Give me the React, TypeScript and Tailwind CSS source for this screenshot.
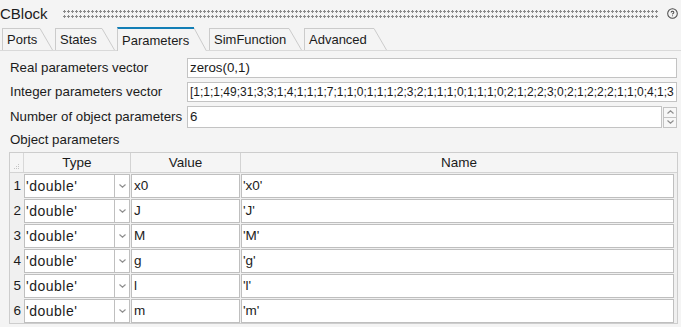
import clsx from "clsx";

const tabs = [
  { label: "Ports", width: "w-[38px]" },
  { label: "States", width: "w-[47px]" },
  { label: "Parameters", width: "w-[77px]", active: true },
  { label: "SimFunction", width: "w-[80px]" },
  { label: "Advanced", width: "w-[70px]" },
];

const rows = [
  { type: "'double'", value: "x0", name: "'x0'" },
  { type: "'double'", value: "J", name: "'J'" },
  { type: "'double'", value: "M", name: "'M'" },
  { type: "'double'", value: "g", name: "'g'" },
  { type: "'double'", value: "l", name: "'l'" },
  { type: "'double'", value: "m", name: "'m'" },
];

const intVector =
  "[1;1;1;49;31;3;3;1;4;1;1;1;7;1;1;0;1;1;1;2;3;2;1;1;1;0;1;1;1;0;2;1;2;2;3;0;2;1;2;2;2;1;1;0;4;1;3";

function Tab({ label, width, active }: { label: string; width: string; active?: boolean }) {
  const h = active ? 24 : 22;
  return (
    <div className={clsx("flex bg-[#f4f4f4]", active ? "h-[24px] -mb-px" : "h-[22px]")}>
      <div
        className={clsx(
          width,
          "flex items-center border-l border-[#cbcbcb] pl-[4px] whitespace-nowrap",
          active ? "border-t-2 border-t-[#137fb6]" : "border-t"
        )}
      >
        {label}
      </div>
      <svg width="13" height={h} className="block">
        <path d={`M0 ${active ? 1 : 0.5} L12.5 ${h}`} stroke="#cbcbcb" strokeWidth="1" fill="none" />
      </svg>
    </div>
  );
}

function Chevron({ up }: { up?: boolean }) {
  return (
    <svg width="7" height="4" viewBox="0 0 7 4">
      <path d={up ? "M0.5 3.5 L3.5 0.8 L6.5 3.5" : "M0.5 0.5 L3.5 3.2 L6.5 0.5"} stroke="#8f8f8f" strokeWidth="1.2" fill="none" />
    </svg>
  );
}

function Field({ label, children }: { label: string; children: React.ReactNode }) {
  return (
    <div className="flex items-center">
      <div className="w-[177px] whitespace-nowrap text-[13.3px]">{label}</div>
      {children}
    </div>
  );
}

export default function App() {
  return (
    <div className="h-[327px] w-[681px] overflow-hidden bg-[#f4f4f4] font-['Liberation_Sans',Arial,sans-serif] text-[13px] leading-none text-[#1b1b1b]">
      <div className="flex h-[26px] items-center">
        <span className="text-[15px]">CBlock</span>
        <div className="ml-[15px] mt-[3px] h-[10px] flex-1 bg-[radial-gradient(circle_at_1.5px_1.5px,#8a8a8a_1px,transparent_1.4px)] bg-[length:4px_5px]" />
        <svg width="11" height="11" viewBox="0 0 24 24" className="ml-[8px] mr-[3px]" fill="none" stroke="#4a4a4a" strokeWidth="2.2" strokeLinecap="round">
          <circle cx="12" cy="12" r="10.5" />
          <path d="M9.09 9a3 3 0 0 1 5.83 1c0 2-3 3-3 3" />
          <path d="M12 17h.01" />
        </svg>
      </div>

      <div className="flex h-[25px] items-end gap-[2px] border-b border-[#d9d9d9] pl-[2px]">
        {tabs.map((t) => (
          <Tab key={t.label} {...t} />
        ))}
      </div>

      <div className="flex flex-col gap-[4px] px-[4px] pt-[7px] pl-[10px]">
        <Field label="Real parameters vector">
          <div className="flex h-[20px] flex-1 items-center border border-[#c3c3c3] bg-white pl-[2px] text-[13.3px]">zeros(0,1)</div>
        </Field>
        <Field label="Integer parameters vector">
          <div className="flex h-[20px] flex-1 items-center overflow-hidden whitespace-nowrap border border-[#c3c3c3] bg-white pl-[2px] text-[12px]">
            {intVector}
          </div>
        </Field>
        <Field label="Number of object parameters">
          <div className="flex h-[22px] flex-1 items-center border border-[#c3c3c3] bg-white pl-[2px] text-[13.3px]">6</div>
          <div className="ml-px flex h-[21px] w-[14px] flex-col border border-[#c3c3c3]">
            <div className="flex flex-1 items-center justify-center border-b border-[#c3c3c3] bg-[#f7f7f7]">
              <Chevron up />
            </div>
            <div className="flex flex-1 items-center justify-center bg-[#f7f7f7]">
              <Chevron />
            </div>
          </div>
        </Field>
      </div>

      <div className="flex h-[24px] items-center pl-[10px] text-[13.3px]">Object parameters</div>

      <div className="ml-[9px] mr-[3px] border border-[#cdcdcd] bg-[#f0f0f0] text-[13.5px]">
        <div className="flex h-[20px] border-b border-[#d3d3d3] bg-[#f5f5f5]">
          <div className="relative w-[14px] border-r border-[#d8d8d8]">
            <svg width="5" height="5" className="absolute bottom-[3px] right-[4px]" fill="#c4c4c4">
              <rect x="4" y="0" width="1" height="1" />
              <rect x="2" y="2" width="1" height="1" />
              <rect x="4" y="2" width="1" height="1" />
              <rect x="0" y="4" width="1" height="1" />
              <rect x="2" y="4" width="1" height="1" />
              <rect x="4" y="4" width="1" height="1" />
            </svg>
          </div>
          <div className="flex w-[107px] items-center justify-center border-r border-[#d3d3d3]">Type</div>
          <div className="flex w-[110px] items-center justify-center border-r border-[#d3d3d3]">Value</div>
          <div className="flex flex-1 items-center justify-center">Name</div>
        </div>
        {rows.map((r, i) => (
          <div key={i} className="flex h-[25px] pt-px">
            <div className="flex w-[14px] items-center justify-end pr-[3px]">{i + 1}</div>
            <div className="flex w-[91px] items-center border border-[#bfbfbf] bg-white pl-[1px] text-[14px] tracking-[0.5px]">{r.type}</div>
            <div className="flex w-[15px] items-center justify-center border-y border-r border-[#bfbfbf] bg-white">
              <Chevron />
            </div>
            <div className="ml-px flex w-[109px] items-center border border-[#bfbfbf] bg-white pl-[2px]">{r.value}</div>
            <div className="ml-px mr-[3px] flex flex-1 items-center border border-[#bfbfbf] bg-white pl-[1px]">{r.name}</div>
          </div>
        ))}
      </div>
    </div>
  );
}
